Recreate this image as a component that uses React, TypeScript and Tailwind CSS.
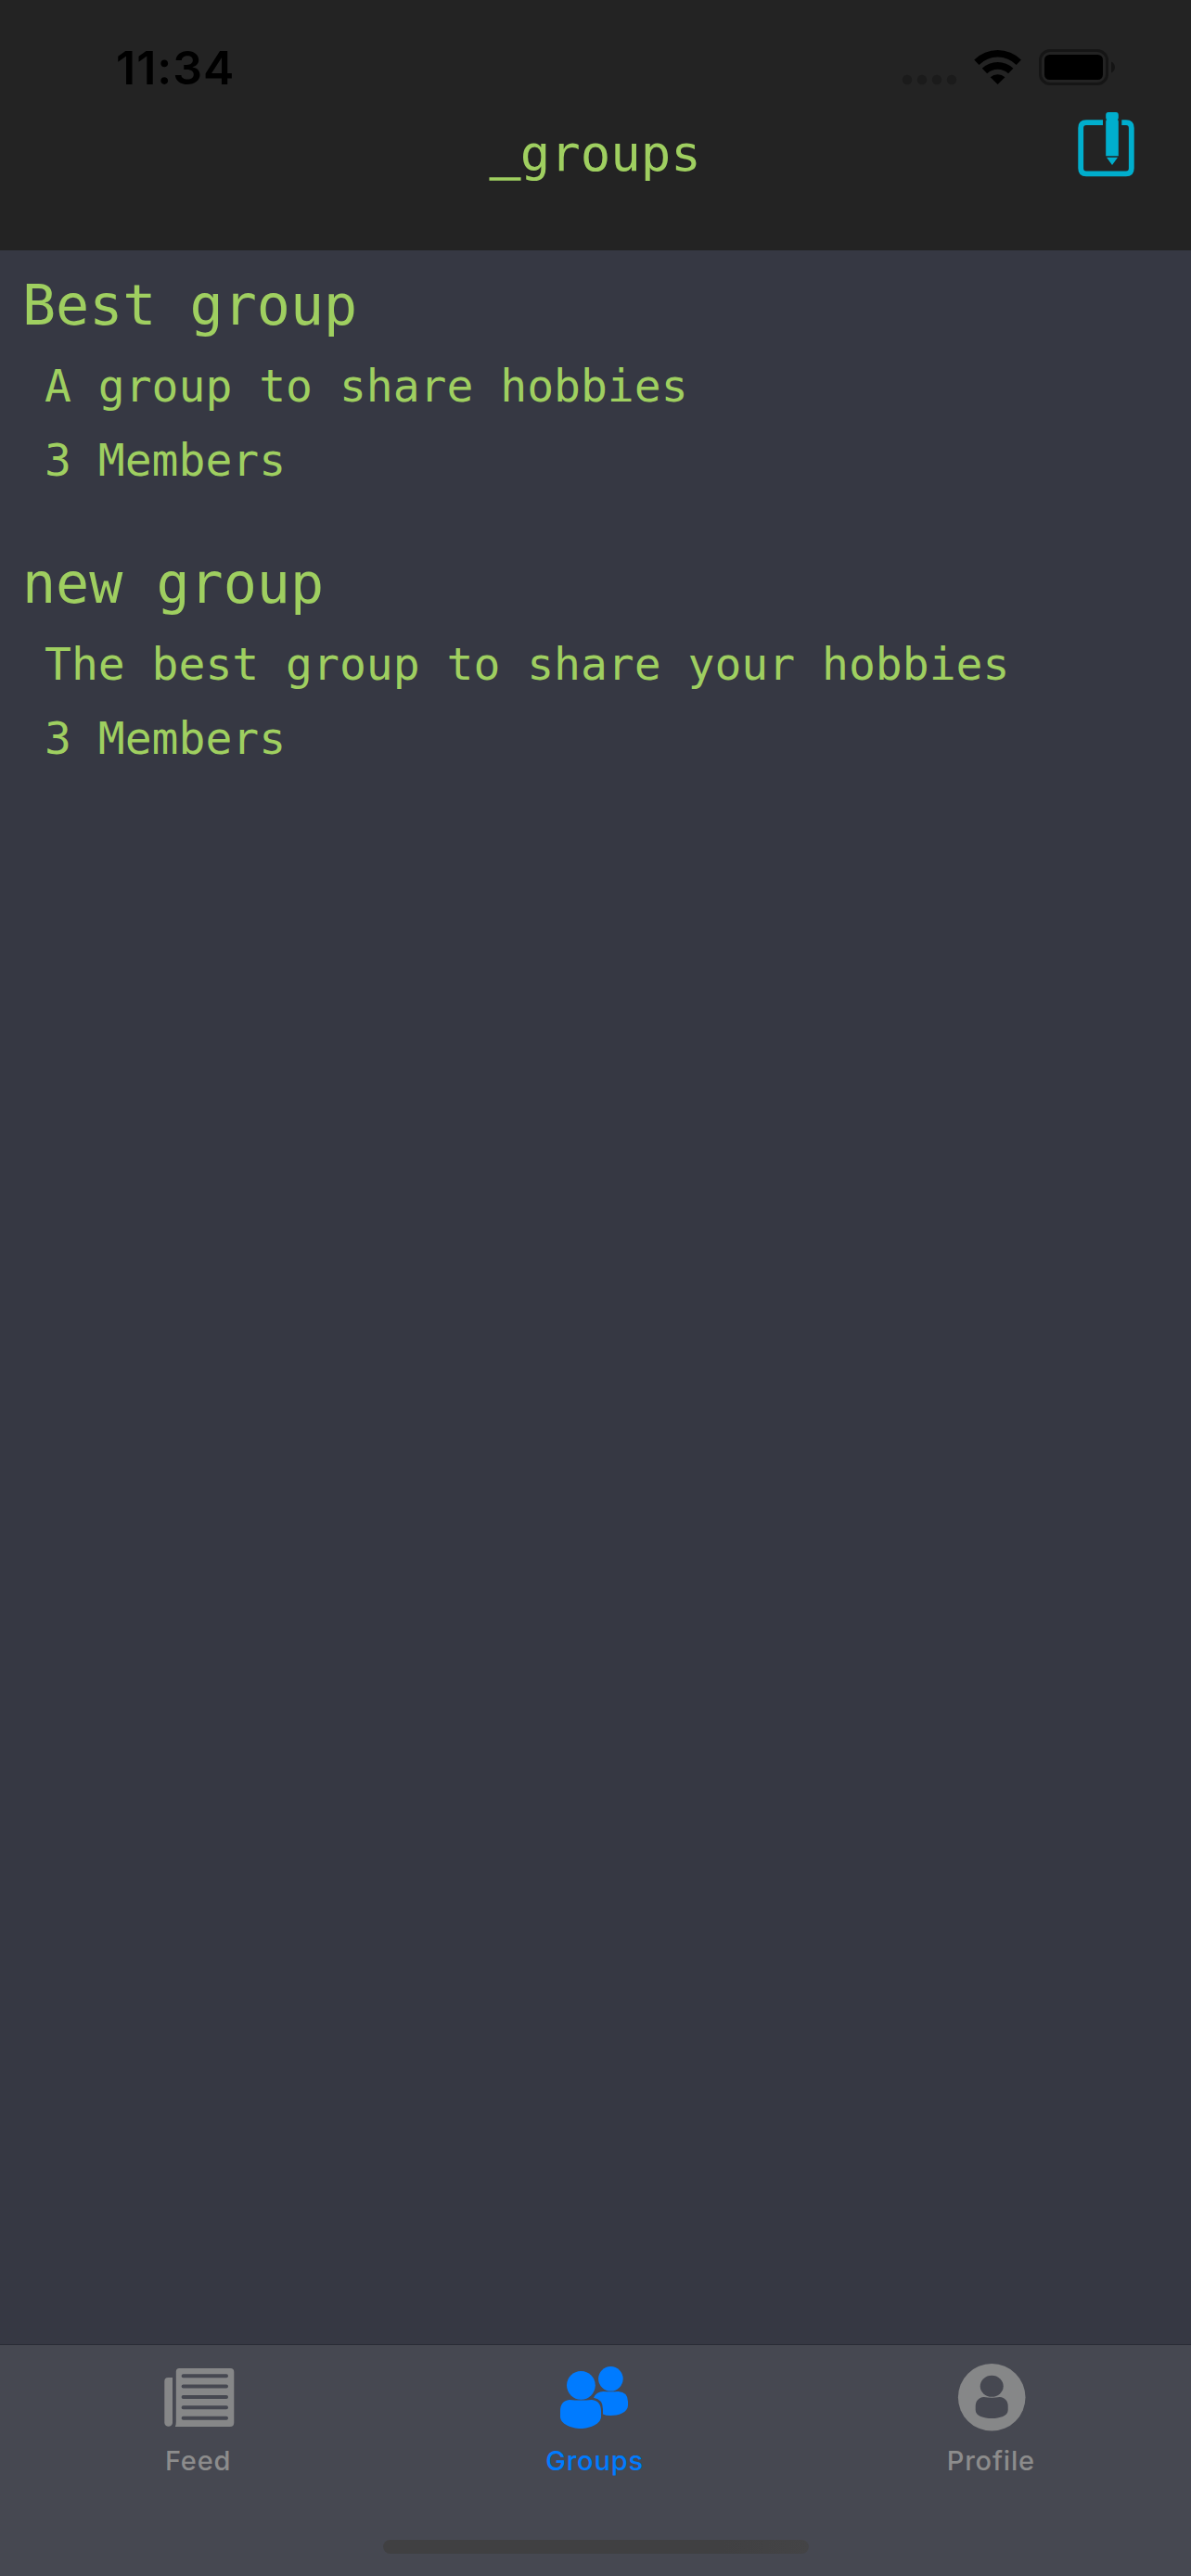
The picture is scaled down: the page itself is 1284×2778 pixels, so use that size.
import type { ReactNode } from "react";

type Group = { name: string; description: string; members: number };

const groups: Group[] = [
  { name: "Best group", description: "A group to share hobbies", members: 3 },
  { name: "new group", description: "The best group to share your hobbies", members: 3 },
];

function StatusBar() {
  return (
    <div className="flex h-[120px] items-start justify-between pl-[125px] pr-[78px] text-black">
      <span className="mt-[42px] font-['Inter',sans-serif] text-[50px] leading-[62px] font-semibold tracking-[1px]">11:34</span>
      <svg className="mt-[48px] h-[48px] w-[236px]" viewBox="970 48 236 48" aria-hidden="true">
        <g fill="#1b1b1b">
          <circle cx="978" cy="86" r="5.2" />
          <circle cx="994" cy="86" r="5.2" />
          <circle cx="1010" cy="86" r="5.2" />
          <circle cx="1026" cy="86" r="5.2" />
        </g>
        <path d="M1050.3 64.4 A36 36 0 0 1 1100.9 64.4 L1095.7 69.9 A28.5 28.5 0 0 0 1055.500 69.9 Z" />
        <path d="M1058.8 73.7 A24.500 24.500 0 0 1 1092.4 73.7 L1087 79.2 A16.500 16.500 0 0 0 1064.200 79.2 Z" />
        <path d="M1067.700 83.2 A12 12 0 0 1 1083.500 83.2 L1075.600 91 Z" />
        <rect x="1121.500" y="54.500" width="72" height="36" rx="10.500" fill="none" stroke="#151515" strokeWidth="3" />
        <rect x="1126" y="59" width="63" height="27" rx="5.500" />
        <path d="M1198 66.500 C1203.300 68.500 1203.300 76.500 1198 78.500 Z" fill="#141414" />
      </svg>
    </div>
  );
}

function ComposeIcon() {
  return (
    <svg className="h-[72px] w-[62px]" viewBox="1161 119 62 72" aria-hidden="true">
      <path
        d="M1189 132.200 H1171 Q1165.200 132.200 1165.200 138 V181.500 Q1165.200 187.300 1171 187.300 H1214 Q1219.800 187.300 1219.800 181.500 V138 Q1219.800 132.200 1214 132.200 H1209.300"
        fill="none"
        stroke="#00aecd"
        strokeWidth="5.800"
      />
      <g fill="#00aecd">
        <path d="M1195 121 H1203 Q1205.800 121 1205.800 124 V127 Q1205.800 128.500 1204.800 129 Q1205.800 129.500 1205.800 131 V168.300 H1192.200 V131 Q1192.200 129.500 1193.200 129 Q1192.200 128.500 1192.200 127 V124 Q1192.200 121 1195 121 Z" />
        <path d="M1193 169.700 H1205 L1199 178 Z" />
      </g>
    </svg>
  );
}

function FeedIcon() {
  return (
    <svg className="h-[80px] w-[80px]" viewBox="173.7 2545 80 80" aria-hidden="true">
      <g fill="#868788">
        <path d="M181 2564 H185.700 V2612.500 A4.350 4.350 0 0 1 177 2612.500 V2568 Q177 2564 181 2564 Z" />
        <path d="M193 2554 H248 Q252 2554 252 2558 V2612.500 Q252 2617 247.500 2617 H188.500 Q189.500 2615 189.500 2612 V2557.500 Q189.500 2554 193 2554 Z" />
      </g>
      <g stroke="#464851" strokeWidth="4" strokeLinecap="round">
        <path d="M197.300 2562.200 H243.700 M197.300 2573.500 H243.700 M197.300 2585 H243.700 M197.300 2596.200 H243.700 M197.300 2607.800 H243.700" />
      </g>
    </svg>
  );
}

function GroupsIcon() {
  return (
    <svg className="h-[80px] w-[80px]" viewBox="601 2545 80 80" fill="#007bff" aria-hidden="true">
      <circle cx="658.400" cy="2565.300" r="13.300" />
      <path d="M640 2585.800 Q643 2579 650.500 2579 Q658.500 2579.600 666.500 2579 Q677 2579.500 677 2590 V2594 C677 2602 666 2605 658.500 2605 Q653 2605 650 2603.500 V2598 Q650 2587.500 640 2585.800 Z" />
      <circle cx="626.400" cy="2572.300" r="15.400" />
      <path d="M614 2588 Q626 2589.200 638 2588 C645 2588.500 648 2593.500 648 2600 V2606 C648 2614 636 2619 626 2619 C616 2619 604 2614 604 2606 V2600 C604 2593.500 607 2588.500 614 2588 Z" />
    </svg>
  );
}

function ProfileIcon() {
  return (
    <svg className="h-[80px] w-[80px]" viewBox="1028.3 2545 80 80" aria-hidden="true">
      <circle cx="1069.500" cy="2585.300" r="36.300" fill="#868788" />
      <g fill="#464851">
        <ellipse cx="1069.500" cy="2573.300" rx="12.500" ry="11.500" />
        <path d="M1061 2585 Q1069.500 2586.600 1078 2585 C1084 2585.500 1087 2589.500 1087 2595 V2599 C1087 2605.500 1078 2608 1069.500 2608 C1061 2608 1052 2605.500 1052 2599 V2595 C1052 2589.500 1055 2585.500 1061 2585 Z" />
      </g>
    </svg>
  );
}

function Tab({ icon, label, active = false }: { icon: ReactNode; label: string; active?: boolean }) {
  return (
    <div className={`flex flex-1 flex-col items-center pt-4 ${active ? "text-[#007bff]" : "text-[#8c8c8c]"}`}>
      {icon}
      <span className="mt-[11px] font-['Inter',sans-serif] text-[29px] leading-[36px] font-medium tracking-[0.8px]">
        {label}
      </span>
    </div>
  );
}

export default function App() {
  return (
    <div className="flex h-[2778px] w-[1284px] flex-col overflow-hidden bg-[#363843] font-['DejaVu_Sans_Mono',monospace] text-[#9fcf60]">
      <header className="h-[270px] bg-[#232323]">
        <StatusBar />
        <div className="grid grid-cols-3 items-start">
          <h1 className="col-start-2 mt-[14px] text-center text-[54px] leading-[64px]">
            <span className="relative -top-[3px] [-webkit-text-stroke:1.5px_#9fcf60]">_</span>groups
          </h1>
          <button className="-mt-px mr-[61px] justify-self-end" aria-label="Create group">
            <ComposeIcon />
          </button>
        </div>
      </header>

      <main className="flex-1">
        {groups.map((group) => (
          <article key={group.name} className="flex h-[300px] flex-col gap-6 px-6 pt-6">
            <h2 className="text-[60px] leading-[70px]">{group.name}</h2>
            <p className="pl-6 text-[48px] leading-[56px]">{group.description}</p>
            <p className="pl-6 text-[48px] leading-[56px]">{group.members} Members</p>
          </article>
        ))}
      </main>

      <footer className="flex h-[250px] flex-col border-t border-[#292b35] bg-[#464851]">
        <nav className="flex flex-1 pr-[2px]">
          <Tab icon={<FeedIcon />} label="Feed" />
          <Tab icon={<GroupsIcon />} label="Groups" active />
          <Tab icon={<ProfileIcon />} label="Profile" />
        </nav>
        <div className="mb-6 h-[15px] w-[459px] self-center rounded-full bg-gradient-to-r from-[#404042] from-80% to-[#444446]" />
      </footer>
    </div>
  );
}
